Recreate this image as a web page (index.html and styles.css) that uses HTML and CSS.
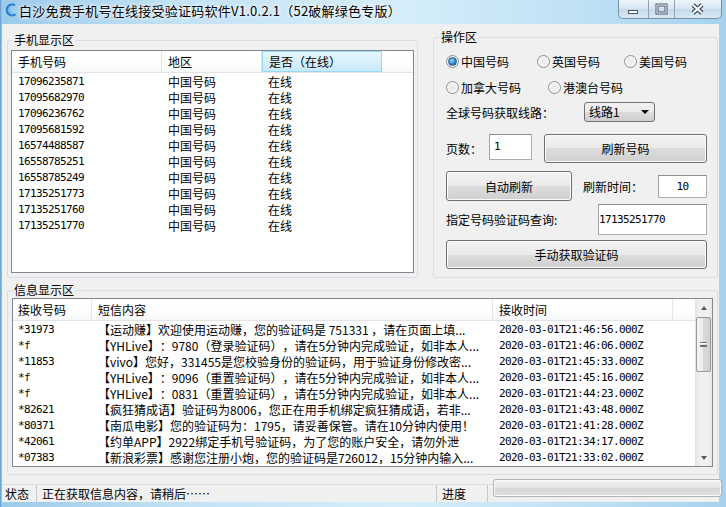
FILE: index.html
```html
<!DOCTYPE html>
<html lang="zh-CN">
<head>
    <meta charset="UTF-8">
    <title>白沙免费手机号在线接受验证码软件</title>
    <link rel="stylesheet" href="styles.css">
</head>
<body>
    <div class="window">
        <div class="titlebar">
            <svg class="app-icon" width="13" height="14" viewBox="0 0 13 14">
                <path d="M10 2.4A5.4 5.4 0 1 0 10.6 11.2" fill="none" stroke="#2b7fd2" stroke-width="2.2"/>
                <path d="M4.6 4.2c-1.2 1.6-0.6 4 1.6 5.4" fill="none" stroke="#67b3ef" stroke-width="1.6" stroke-linecap="round"/>
            </svg>
            <span class="title">白沙免费手机号在线接受验证码软件V1.0.2.1（52破解绿色专版）</span>
            <div class="caption">
                <span class="cap cap-min">
                    <svg width="29" height="18"><rect x="9.5" y="10.5" width="9" height="3" fill="#fff" stroke="#45566b"/></svg>
                </span>
                <span class="cap cap-max">
                    <svg width="25" height="18"><rect x="8" y="5" width="9" height="8" fill="none" stroke="#45566b" stroke-width="3"/><rect x="8" y="5" width="9" height="8" fill="none" stroke="#fff" stroke-width="1"/></svg>
                </span>
                <span class="cap cap-close">
                    <svg width="46" height="18"><path d="M18 5L27 13M27 5L18 13" stroke="#3d4c5f" stroke-width="4.4"/><path d="M18 5L27 13M27 5L18 13" stroke="#fff" stroke-width="2.2"/></svg>
                </span>
            </div>
        </div>

        <div class="client">
            <div class="panels">
                <div class="top">
                    <fieldset class="group group-phones">
                        <legend>手机显示区</legend>
                        <div class="listview lv-phones">
                            <div class="lv-head">
                                <span class="hcell">手机号码</span>
                                <span class="hcell">地区</span>
                                <span class="hcell hot">是否（在线）</span>
                                <span class="hcell filler"></span>
                            </div>
                            <div class="lv-body" id="phoneRows"></div>
                        </div>
                    </fieldset>

                    <fieldset class="group group-ops">
                        <legend>操作区</legend>
                        <div class="ops-row ops-radios1">
                            <label class="radio checked w91"><i></i>中国号码</label>
                            <label class="radio w87"><i></i>英国号码</label>
                            <label class="radio"><i></i>美国号码</label>
                        </div>
                        <div class="ops-row ops-radios2">
                            <label class="radio w102"><i></i>加拿大号码</label>
                            <label class="radio"><i></i>港澳台号码</label>
                        </div>
                        <div class="ops-row ops-line">
                            <span class="line-label">全球号码获取线路：</span>
                            <div class="combo">线路1<span class="combo-arrow"></span></div>
                        </div>
                        <div class="ops-row ops-page">
                            <span class="page-label">页数：</span>
                            <div class="textbox tb-page num">1</div>
                            <button class="btn btn-refresh">刷新号码</button>
                        </div>
                        <div class="ops-row ops-auto">
                            <button class="btn btn-auto">自动刷新</button>
                            <span class="auto-label">刷新时间：</span>
                            <div class="textbox tb-time num">10</div>
                        </div>
                        <div class="ops-row ops-query">
                            <span>指定号码验证码查询:</span>
                            <div class="textbox tb-query num">17135251770</div>
                        </div>
                        <button class="btn btn-manual">手动获取验证码</button>
                    </fieldset>
                </div>

                <fieldset class="group group-msgs">
                    <legend>信息显示区</legend>
                    <div class="listview lv-msgs">
                        <div class="lv-main">
                            <div class="lv-head">
                                <span class="hcell">接收号码</span>
                                <span class="hcell">短信内容</span>
                                <span class="hcell">接收时间</span>
                                <span class="hcell filler"></span>
                            </div>
                            <div class="lv-body" id="msgRows"></div>
                        </div>
                        <div class="vscroll">
                            <span class="sb-arrow up"></span>
                            <span class="sb-thumb"><i></i></span>
                            <span class="sb-track"></span>
                            <span class="sb-arrow down"></span>
                        </div>
                    </div>
                </fieldset>
            </div>

            <div class="statusbar">
                <span class="sb-cell sb-state">状态</span>
                <span class="sb-cell sb-msg">正在获取信息内容，请稍后……</span>
                <span class="sb-cell sb-prog">进度</span>
                <div class="progress"></div>
            </div>
        </div>
    </div>

    <script>
        const phones = [
            '17096235871', '17095682970', '17096236762', '17095681592', '16574488587',
            '16558785251', '16558785249', '17135251773', '17135251760', '17135251770'
        ];

        const messages = [
            ['*31973', '【运动赚】欢迎使用运动赚，您的验证码是 751331 ，请在页面上填...', '2020-03-01T21:46:56.000Z'],
            ['*f', '【YHLive】：9780（登录验证码），请在5分钟内完成验证，如非本人...', '2020-03-01T21:46:06.000Z'],
            ['*11853', '【vivo】您好，331455是您校验身份的验证码，用于验证身份修改密...', '2020-03-01T21:45:33.000Z'],
            ['*f', '【YHLive】：9096（重置验证码），请在5分钟内完成验证，如非本人...', '2020-03-01T21:45:16.000Z'],
            ['*f', '【YHLive】：0831（重置验证码），请在5分钟内完成验证，如非本人...', '2020-03-01T21:44:23.000Z'],
            ['*82621', '【疯狂猜成语】验证码为8006，您正在用手机绑定疯狂猜成语，若非...', '2020-03-01T21:43:48.000Z'],
            ['*80371', '【南瓜电影】您的验证码为：1795，请妥善保管。请在10分钟内使用！', '2020-03-01T21:41:28.000Z'],
            ['*42061', '【约单APP】2922绑定手机号验证码，为了您的账户安全，请勿外泄', '2020-03-01T21:34:17.000Z'],
            ['*07383', '【新浪彩票】感谢您注册小炮，您的验证码是726012，15分钟内输入...', '2020-03-01T21:33:02.000Z']
        ];

        document.getElementById('phoneRows').innerHTML = phones.map(p => `
            <div class="row">
                <span class="cell num">${p}</span>
                <span class="cell">中国号码</span>
                <span class="cell">在线</span>
            </div>
        `).join('');

        document.getElementById('msgRows').innerHTML = messages.map(m => `
            <div class="row">
                <span class="cell num">${m[0]}</span>
                <span class="cell">${m[1]}</span>
                <span class="cell num">${m[2]}</span>
            </div>
        `).join('');
    </script>
</body>
</html>
```

FILE: styles.css
```css
* {
    margin: 0;
    padding: 0;
    box-sizing: border-box;
}

body {
    width: 726px;
    height: 507px;
    overflow: hidden;
    font-family: "Noto Sans CJK SC", "Noto Sans", sans-serif;
    font-size: 12px;
    color: #000;
    text-spacing-trim: space-all;
}

.num {
    font-family: "DejaVu Sans Mono", monospace;
    font-size: 11px;
    letter-spacing: -0.62px;
}

.window {
    height: 507px;
    display: flex;
    flex-direction: column;
    background: linear-gradient(90deg, #5d9ad0 0, #9ccbec 2px, #c2e2f5 25%, #d6eefa 55%, #bfe1f4 80%, #a6d2ee 100%);
}

/* title bar */
.titlebar {
    height: 24px;
    display: flex;
    align-items: flex-start;
    padding: 0 4px 0 5px;
}

.app-icon {
    margin-top: 3px;
    flex-shrink: 0;
}

.title {
    margin-left: 1px;
    line-height: 21px;
    font-size: 13px;
    letter-spacing: 0.25px;
    white-space: nowrap;
    text-shadow: 0 0 6px #fff, 0 0 3px #fff;
}

.caption {
    margin-left: auto;
    display: flex;
    height: 19px;
    border: 1px solid #7c8ea3;
    border-top: none;
    border-radius: 0 0 5px 5px;
    overflow: hidden;
    background: linear-gradient(#eef5fb, #d3e4f1 50%, #c4d9ea 50%, #d9e9f4);
}

.cap {
    display: flex;
    height: 18px;
}

.cap-min,
.cap-max {
    border-right: 1px solid #8fa2b6;
}

/* client area */
.client {
    margin: 0 7px 5px 2px;
    height: 478px;
    background: #f0f0f0;
    display: flex;
    flex-direction: column;
}

.panels {
    padding: 6px 1px 0 5px;
}

.top {
    display: flex;
    align-items: flex-start;
    gap: 15px;
    height: 248px;
}

.group {
    border: 1px solid #d5dfe5;
    border-radius: 3px;
    min-width: 0;
}

.group legend {
    padding: 0 2px;
    line-height: 14px;
}

.group-phones {
    width: 411px;
    height: 245px;
    margin-top: 3px;
    padding: 3px 3px 4px 3px;
}

.group-phones legend {
    margin-left: 1px;
}

.group-ops {
    width: 285px;
    height: 248px;
    padding: 9px 10px 0 12px;
}

.group-ops legend {
    margin-left: -7px;
}

.group-msgs {
    width: 711px;
    height: 192px;
    margin-top: 5px;
    padding: 1px 4px 7px 4px;
}

/* list views */
.listview {
    border: 1px solid #828790;
    background: #fff;
    overflow: hidden;
}

.lv-phones {
    height: 223px;
}

.lv-head {
    display: grid;
    height: 22px;
    border-bottom: 1px solid #e2e4e7;
    background: linear-gradient(#fff 0, #fff 55%, #f6f7f9 100%);
}

.lv-phones .lv-head,
.lv-phones .row {
    grid-template-columns: 150px 100px 120px 1fr;
}

.hcell {
    padding-left: 6px;
    line-height: 21px;
    border-right: 1px solid #e3e5e8;
    white-space: nowrap;
}

.hcell.filler {
    border-right: none;
}

.hcell.hot {
    border: 1px solid #96d9f9;
    line-height: 19px;
    background: linear-gradient(#e6f6fd, #d8f0fb 50%, #c9eafa 100%);
}

.lv-body {
    padding-top: 1px;
}

.row {
    display: grid;
    height: 16px;
    line-height: 16px;
}

.cell {
    padding-left: 6px;
    white-space: nowrap;
    overflow: hidden;
}

.lv-msgs {
    height: 169px;
    display: flex;
}

.lv-main {
    flex: 1;
}

.lv-msgs .lv-head,
.lv-msgs .row {
    grid-template-columns: 79px 401px 180px 1fr;
}

.lv-msgs .hcell:first-child,
.lv-msgs .cell:first-child {
    padding-left: 5px;
}

/* scrollbar */
.vscroll {
    width: 17px;
    display: flex;
    flex-direction: column;
    background: linear-gradient(90deg, #e2e2e2, #efefef 25%, #f2f2f2 75%, #e6e6e6);
}

.sb-arrow {
    height: 17px;
    display: flex;
    align-items: center;
    justify-content: center;
    flex-shrink: 0;
}

.sb-arrow::before {
    content: "";
    border-left: 3px solid transparent;
    border-right: 3px solid transparent;
}

.sb-arrow.up::before {
    border-bottom: 4px solid #5a5a5a;
}

.sb-arrow.down::before {
    border-top: 4px solid #5a5a5a;
}

.sb-thumb {
    height: 55px;
    margin: 1px 1px 0 1px;
    border: 1px solid #989898;
    border-radius: 2px;
    background: linear-gradient(90deg, #f4f4f4, #e9e9e9 50%, #d9d9d9 50%, #d2d2d2);
    display: flex;
    align-items: center;
    justify-content: center;
}

.sb-thumb i {
    width: 7px;
    height: 5px;
    border-top: 1px solid #707070;
    border-bottom: 1px solid #707070;
    background: linear-gradient(#fff 0 1px, transparent 1px, transparent 2px, #707070 2px 3px, transparent 3px);
}

.sb-track {
    flex: 1;
}

/* operations */
.ops-row {
    display: flex;
    align-items: center;
}

.ops-radios1,
.ops-radios2 {
    height: 16px;
}

.ops-radios1 {
    margin-bottom: 10px;
}

.ops-radios2 {
    margin-bottom: 7px;
}

.radio {
    display: flex;
    align-items: center;
    gap: 2px;
    white-space: nowrap;
}

.w91 { width: 91px; }
.w87 { width: 87px; }
.w102 { width: 102px; }

.radio i {
    width: 13px;
    height: 13px;
    border-radius: 50%;
    border: 1px solid #8e8f8f;
    background: radial-gradient(circle at 50% 50%, #e8e8e8 0, #f2f2f2 50%, #fafafa 100%);
    display: flex;
    align-items: center;
    justify-content: center;
}

.radio.checked i::after {
    content: "";
    width: 7px;
    height: 7px;
    border-radius: 50%;
    border: 1px solid #1d5a91;
    background: radial-gradient(circle at 40% 35%, #a5dcfb 0, #3d95d8 45%, #145b9e 100%);
}

.ops-line {
    height: 20px;
    margin-bottom: 12px;
}

.line-label {
    width: 138px;
}

.combo {
    width: 71px;
    height: 20px;
    border: 1px solid #707070;
    border-radius: 3px;
    padding-left: 4px;
    line-height: 18px;
    display: flex;
    background: linear-gradient(#f2f2f2 0, #ebebeb 50%, #dddddd 50%, #cfcfcf 100%);
}

.combo-arrow {
    margin-left: auto;
    margin-right: 5px;
    align-self: center;
    border-left: 4px solid transparent;
    border-right: 4px solid transparent;
    border-top: 4px solid #000;
}

.textbox {
    background: #fff;
    border: 1px solid #abadb3;
    border-top-color: #8a8d94;
    border-left-color: #9fa2a8;
    white-space: nowrap;
}

.ops-page {
    height: 29px;
    align-items: flex-start;
    margin-bottom: 8px;
}

.page-label {
    width: 43px;
    line-height: 29px;
}

.tb-page {
    width: 43px;
    height: 26px;
    padding-left: 4px;
    line-height: 24px;
}

.btn {
    font: inherit;
    color: #000;
    border: 1px solid #707070;
    border-radius: 3px;
    background: linear-gradient(#f2f2f2 0, #ebebeb 50%, #dddddd 50%, #cfcfcf 100%);
    box-shadow: inset 0 0 0 1px #fbfbfb;
}

.btn-refresh {
    width: 163px;
    height: 29px;
    margin-left: 12px;
}

.ops-auto {
    height: 30px;
    margin-bottom: 3px;
}

.btn-auto {
    width: 126px;
    height: 30px;
}

.auto-label {
    margin-left: 11px;
}

.tb-time {
    margin-left: auto;
    width: 49px;
    height: 23px;
    line-height: 21px;
    text-align: center;
}

.ops-query {
    height: 31px;
    margin-bottom: 5px;
}

.tb-query {
    margin-left: auto;
    width: 109px;
    height: 31px;
    line-height: 29px;
}

.btn-manual {
    width: 261px;
    height: 29px;
}

/* status bar */
.statusbar {
    margin-top: 9px;
    height: 18px;
    display: flex;
    border-top: 1px solid #dcdcdc;
}

.sb-cell {
    line-height: 17px;
    border-right: 1px solid #c8c8c8;
    padding-left: 5px;
    white-space: nowrap;
}

.sb-state {
    width: 35px;
    padding-left: 3px;
}

.sb-msg {
    width: 400px;
}

.sb-prog {
    width: 51px;
}

.progress {
    flex: 1;
    height: 18px;
    margin: -6px -3px 0 5px;
    border: 1px solid #b2b2b2;
    border-radius: 3px;
    background: linear-gradient(#f4f4f4, #e4e4e4 50%, #d6d6d6 50%, #dfdfdf);
    box-shadow: inset 0 0 0 1px #fafafa;
}
```
